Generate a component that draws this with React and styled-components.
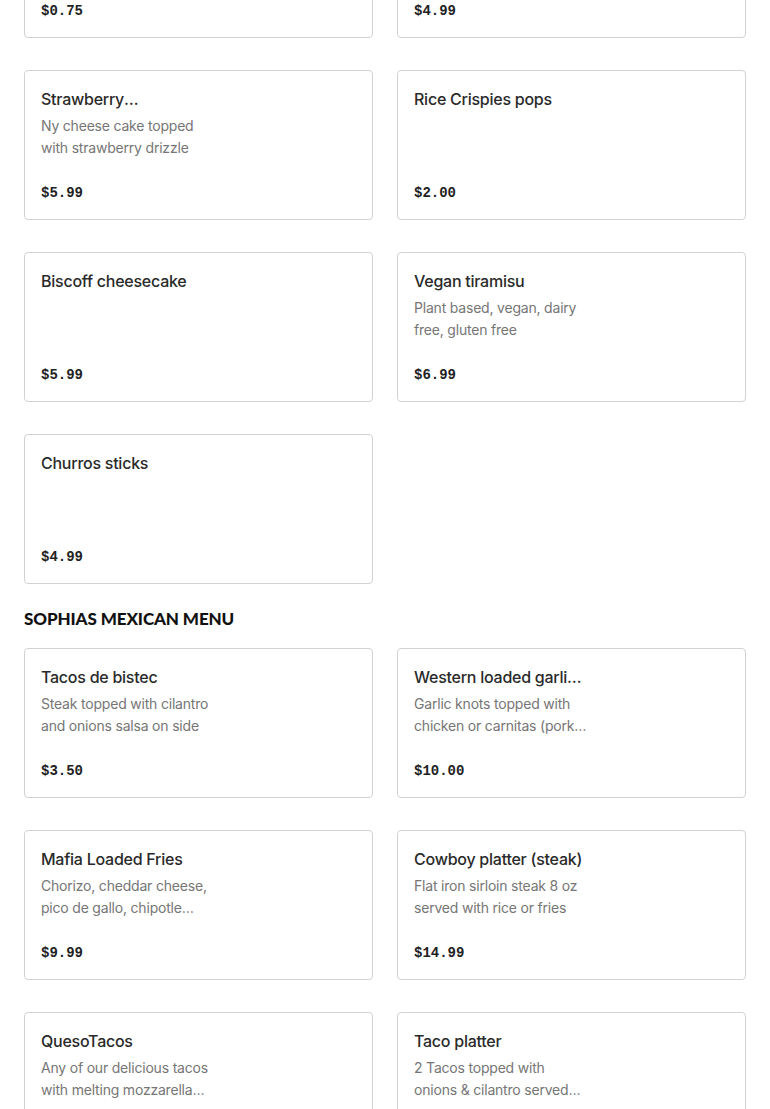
import React from 'react';
import styled, { createGlobalStyle } from 'styled-components';

const GlobalStyle = createGlobalStyle`
  body {
    margin: 0;
    background: #fff;
    font-family: Inter, "Noto Sans", sans-serif;
    color: #2a2a2a;
  }
`

const Page = styled.div`
  padding: 0 24px;
  margin-top: -112px;
`

const Section = styled.section`
  display: flex;
  flex-direction: column;
`

const SectionTitle = styled.h2`
  margin: 23px 0 17px;
  font-family: Lato, "Noto Sans", sans-serif;
  font-weight: 900;
  font-size: 17px;
  line-height: 24px;
  letter-spacing: -0.1px;
  text-transform: uppercase;
  color: #111;
`

const Grid = styled.div`
  display: grid;
  grid-template-columns: 1fr 1fr;
  column-gap: 24px;
  row-gap: 32px;
`

const Card = styled.div`
  height: 150px;
  box-sizing: border-box;
  border: 1px solid #d2d2d2;
  border-radius: 4px;
  padding: 16px 16px 15px;
  display: flex;
  flex-direction: column;
`

const Name = styled.div`
  font-size: 16px;
  font-weight: 500;
  line-height: 24px;
  letter-spacing: -0.25px;
  width: 170px;
  display: -webkit-box;
  -webkit-line-clamp: 1;
  -webkit-box-orient: vertical;
  overflow: hidden;
`

const Desc = styled.div`
  margin-top: 4px;
  font-size: 14px;
  line-height: 22px;
  letter-spacing: -0.2px;
  color: #767676;
  max-width: 174px;
  display: -webkit-box;
  -webkit-line-clamp: 2;
  -webkit-box-orient: vertical;
  overflow: hidden;
`

const Price = styled.div`
  margin-top: auto;
  font-family: "Liberation Mono", monospace;
  font-weight: 700;
  font-size: 14px;
  line-height: 22px;
  color: #222;
`

const desserts = [
  { name: 'Conchas', desc: '', price: '$0.75' },
  { name: 'Flan', desc: '', price: '$4.99' },
  { name: 'Strawberry cheesecake', desc: 'Ny cheese cake topped with strawberry drizzle', price: '$5.99' },
  { name: 'Rice Crispies pops', desc: '', price: '$2.00' },
  { name: 'Biscoff cheesecake', desc: '', price: '$5.99' },
  { name: 'Vegan tiramisu', desc: 'Plant based, vegan, dairy free, gluten free', price: '$6.99' },
  { name: 'Churros sticks', desc: '', price: '$4.99' },
]

const mexican = [
  { name: 'Tacos de bistec', desc: 'Steak topped with cilantro and onions salsa on side', price: '$3.50' },
  { name: 'Western loaded garlic knots', desc: 'Garlic knots topped with chicken or carnitas (pork) and cheese', price: '$10.00' },
  { name: 'Mafia Loaded Fries', desc: 'Chorizo, cheddar cheese, pico de gallo, chipotle mayo and sour cream', price: '$9.99' },
  { name: 'Cowboy platter (steak)', desc: 'Flat iron sirloin steak 8 oz served with rice or fries', price: '$14.99' },
  { name: 'QuesoTacos', desc: 'Any of our delicious tacos with melting mozzarella cheese', price: '$3.99' },
  { name: 'Taco platter', desc: '2 Tacos topped with onions & cilantro served with rice and beans', price: '$9.99' },
]

function MenuCard({ item }) {
  return (
    <Card>
      <Name>{item.name}</Name>
      {item.desc && <Desc>{item.desc}</Desc>}
      <Price>{item.price}</Price>
    </Card>
  )
}

export default function App() {
  return (
    <Page>
      <GlobalStyle />
      <Section>
        <Grid>
          {desserts.map(item => <MenuCard key={item.name} item={item} />)}
        </Grid>
      </Section>
      <Section>
        <SectionTitle>Sophias Mexican Menu</SectionTitle>
        <Grid>
          {mexican.map(item => <MenuCard key={item.name} item={item} />)}
        </Grid>
      </Section>
    </Page>
  )
}
